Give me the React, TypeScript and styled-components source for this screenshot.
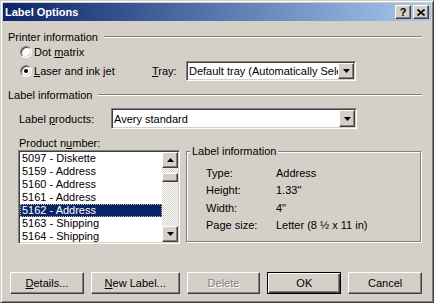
import React from 'react'
import styled, { createGlobalStyle } from 'styled-components'

const face = '#d4d0c8'
const shadow = '#808080'
const dark = '#404040'
const light = '#ffffff'

const raised = `
  border: 1px solid;
  border-color: ${light} ${dark} ${dark} ${light};
  box-shadow: inset -1px -1px ${shadow}, inset 1px 1px ${face};
`

const sunken = `
  border: 1px solid;
  border-color: ${shadow} ${light} ${light} ${shadow};
  box-shadow: inset 1px 1px ${dark}, inset -1px -1px ${face};
`

const GlobalStyle = createGlobalStyle`
  html, body {
    margin: 0;
    padding: 0;
    background: ${face};
  }
  body {
    font-family: 'Liberation Sans', Arial, sans-serif;
    font-size: 11px;
    color: #000;
  }
`

const Window = styled.div`
  width: 434px;
  height: 303px;
  box-sizing: border-box;
  background: ${face};
  border: 1px solid;
  border-color: ${face} ${dark} ${dark} ${face};
  box-shadow: inset 1px 1px ${light}, inset -1px -1px ${shadow};
  padding: 2px;
  display: flex;
  flex-direction: column;
`

const TitleBar = styled.div`
  height: 18px;
  display: flex;
  align-items: center;
  padding: 0 2px 0 2px;
  background: linear-gradient(to right, #0a246a, #a6caf0);
  color: #fff;
  font-weight: bold;
  font-size: 11px;
`

const TitleText = styled.span`
  flex: 1;
`

const CaptionButtons = styled.div`
  display: flex;
  gap: 2px;
`

const CaptionButton = styled.div`
  ${raised}
  box-sizing: border-box;
  width: 16px;
  height: 14px;
  background: ${face};
  color: #000;
  display: flex;
  align-items: center;
  justify-content: center;
  font-size: 11px;
  font-weight: bold;
  line-height: 1;
`

const Body = styled.div`
  flex: 1;
  display: flex;
  flex-direction: column;
  padding: 10px 9px 0 5px;
`

const Heading = styled.div<{ $top?: number }>`
  display: flex;
  align-items: center;
  height: 12px;
  margin-top: ${({ $top }) => $top ?? 0}px;
  white-space: nowrap;

  &::after {
    content: '';
    flex: 1;
    margin-left: 6px;
    border-top: 1px solid ${shadow};
    border-bottom: 1px solid ${light};
  }
`

const Row = styled.div<{ $height: number; $indent: number; $top?: number }>`
  display: flex;
  align-items: center;
  height: ${({ $height }) => $height}px;
  padding-left: ${({ $indent }) => $indent}px;
  margin-top: ${({ $top }) => $top ?? 0}px;
`

const RadioLabel = styled.label<{ $width?: number }>`
  display: flex;
  align-items: center;
  gap: 2px;
  width: ${({ $width }) => ($width ? `${$width}px` : 'auto')};
`

const RadioCircle = styled.span<{ $checked?: boolean }>`
  box-sizing: border-box;
  width: 12px;
  height: 12px;
  border-radius: 50%;
  border: 1px solid;
  border-color: ${shadow} ${light} ${light} ${shadow};
  box-shadow: inset 1px 1px ${dark}, inset -1px -1px ${face};
  background: #fff;
  display: flex;
  align-items: center;
  justify-content: center;

  &::after {
    content: '';
    width: 4px;
    height: 4px;
    border-radius: 50%;
    background: #000;
    display: ${({ $checked }) => ($checked ? 'block' : 'none')};
  }
`

const FieldLabel = styled.span<{ $width: number }>`
  width: ${({ $width }) => $width}px;
`

const Combo = styled.div<{ $width: number; $height: number }>`
  ${sunken}
  box-sizing: border-box;
  width: ${({ $width }) => $width}px;
  height: ${({ $height }) => $height}px;
  padding: 1px;
  background: #fff;
  display: flex;
  align-items: stretch;
`

const ComboValue = styled.span`
  flex: 1;
  overflow: hidden;
  white-space: nowrap;
  padding-left: 1px;
  display: flex;
  align-items: center;
`

const ArrowButton = styled.div<{ $height?: number }>`
  ${raised}
  box-sizing: border-box;
  width: 16px;
  height: ${({ $height }) => ($height ? `${$height}px` : 'auto')};
  background: ${face};
  display: flex;
  align-items: center;
  justify-content: center;
  flex-shrink: 0;
`

const Lower = styled.div`
  display: flex;
  align-items: flex-start;
  margin-top: 8px;
  padding-left: 10px;
`

const ListColumn = styled.div`
  width: 162px;
  display: flex;
  flex-direction: column;
`

const SmallLabel = styled.div`
  height: 12px;
  line-height: 12px;
  padding-left: 1px;
`

const ListBox = styled.div`
  ${sunken}
  box-sizing: border-box;
  margin-top: 1px;
  height: 94px;
  padding: 1px;
  background: #fff;
  display: flex;
`

const Items = styled.div`
  flex: 1;
  overflow: hidden;
`

const Item = styled.div<{ $selected?: boolean }>`
  height: 13px;
  line-height: 13px;
  padding-left: 2px;
  white-space: nowrap;
  background: ${({ $selected }) => ($selected ? '#0a246a' : 'transparent')};
  color: ${({ $selected }) => ($selected ? '#fff' : '#000')};
  outline: ${({ $selected }) => ($selected ? '1px dotted #c8c088' : 'none')};
  outline-offset: -1px;
`

const ScrollBar = styled.div`
  width: 16px;
  display: flex;
  flex-direction: column;
  background: repeating-conic-gradient(${light} 0 25%, ${face} 0 50%) 0 0 / 2px 2px;
`

const Thumb = styled.div`
  ${raised}
  box-sizing: border-box;
  height: 9px;
  margin-top: 5px;
  background: ${face};
`

const Track = styled.div`
  flex: 1;
`

const GroupBox = styled.fieldset`
  box-sizing: border-box;
  width: 235px;
  height: 97px;
  margin: 8px 0 0 6px;
  padding: 0;
  min-width: 0;
  border: 1px solid ${shadow};
  box-shadow: inset 1px 1px ${light}, 1px 1px ${light};
`

const Legend = styled.legend`
  margin-left: 3px;
  padding: 0 2px;
  line-height: 13px;
  background: ${face};
`

const InfoGrid = styled.div`
  display: grid;
  grid-template-columns: 70px 1fr;
  grid-auto-rows: 17.5px;
  align-items: center;
  padding: 6px 0 0 19px;
`

const Buttons = styled.div`
  display: flex;
  gap: 7px;
  margin-top: 28px;
  padding-left: 2px;
`

const PushButton = styled.div<{ $width: number; $default?: boolean; $disabled?: boolean }>`
  box-sizing: border-box;
  width: ${({ $width }) => $width}px;
  height: 22px;
  background: ${face};
  display: flex;
  align-items: center;
  justify-content: center;
  color: ${({ $disabled }) => ($disabled ? shadow : '#000')};
  text-shadow: ${({ $disabled }) => ($disabled ? `1px 1px ${light}` : 'none')};
  ${({ $default }) =>
    $default
      ? `border: 1px solid #000;
         box-shadow: inset 1px 1px ${light}, inset -1px -1px ${dark}, inset -2px -2px ${shadow};`
      : raised}
`

const Arrow = ({ down }: { down?: boolean }) => (
  <svg width="7" height="4" viewBox="0 0 7 4">
    <polygon points={down ? '0,0 7,0 3.5,4' : '0,4 7,4 3.5,0'} fill="#000" />
  </svg>
)

const CloseGlyph = () => (
  <svg width="8" height="7" viewBox="0 0 8 7">
    <path d="M0.5 0.5 L7.5 6.5 M7.5 0.5 L0.5 6.5" stroke="#000" strokeWidth="1.6" />
  </svg>
)

const products = [
  '5097 - Diskette',
  '5159 - Address',
  '5160 - Address',
  '5161 - Address',
  '5162 - Address',
  '5163 - Shipping',
  '5164 - Shipping',
]

const info = [
  ['Type:', 'Address'],
  ['Height:', '1.33"'],
  ['Width:', '4"'],
  ['Page size:', 'Letter (8 \u00bd x 11 in)'],
]

export default function App() {
  return (
    <>
      <GlobalStyle />
      <Window>
        <TitleBar>
          <TitleText>Label Options</TitleText>
          <CaptionButtons>
            <CaptionButton>?</CaptionButton>
            <CaptionButton>
              <CloseGlyph />
            </CaptionButton>
          </CaptionButtons>
        </TitleBar>
        <Body>
          <Heading>Printer information</Heading>
          <Row $height={18} $indent={12}>
            <RadioLabel>
              <RadioCircle />
              <span>
                Dot <u>m</u>atrix
              </span>
            </RadioLabel>
          </Row>
          <Row $height={20} $indent={12}>
            <RadioLabel $width={132}>
              <RadioCircle $checked />
              <span>
                <u>L</u>aser and ink jet
              </span>
            </RadioLabel>
            <FieldLabel $width={34}>
              <u>T</u>ray:
            </FieldLabel>
            <Combo $width={170} $height={20}>
              <ComboValue>Default tray (Automatically Select)</ComboValue>
              <ArrowButton>
                <Arrow down />
              </ArrowButton>
            </Combo>
          </Row>
          <Heading $top={8}>Label information</Heading>
          <Row $height={21} $indent={11} $top={7}>
            <FieldLabel $width={92}>
              Label <u>p</u>roducts:
            </FieldLabel>
            <Combo $width={246} $height={21}>
              <ComboValue>Avery standard</ComboValue>
              <ArrowButton>
                <Arrow down />
              </ArrowButton>
            </Combo>
          </Row>
          <Lower>
            <ListColumn>
              <SmallLabel>
                Product n<u>u</u>mber:
              </SmallLabel>
              <ListBox>
                <Items>
                  {products.map(p => (
                    <Item key={p} $selected={p === '5162 - Address'}>
                      {p}
                    </Item>
                  ))}
                </Items>
                <ScrollBar>
                  <ArrowButton $height={16}>
                    <Arrow />
                  </ArrowButton>
                  <Thumb />
                  <Track />
                  <ArrowButton $height={16}>
                    <Arrow down />
                  </ArrowButton>
                </ScrollBar>
              </ListBox>
            </ListColumn>
            <GroupBox>
              <Legend>Label information</Legend>
              <InfoGrid>
                {info.map(([k, v]) => (
                  <React.Fragment key={k}>
                    <span>{k}</span>
                    <span>{v}</span>
                  </React.Fragment>
                ))}
              </InfoGrid>
            </GroupBox>
          </Lower>
          <Buttons>
            <PushButton $width={74}>
              <span>
                <u>D</u>etails...
              </span>
            </PushButton>
            <PushButton $width={89}>
              <span>
                <u>N</u>ew Label...
              </span>
            </PushButton>
            <PushButton $width={74} $disabled>
              Delete
            </PushButton>
            <PushButton $width={74} $default>
              OK
            </PushButton>
            <PushButton $width={74}>Cancel</PushButton>
          </Buttons>
        </Body>
      </Window>
    </>
  )
}
